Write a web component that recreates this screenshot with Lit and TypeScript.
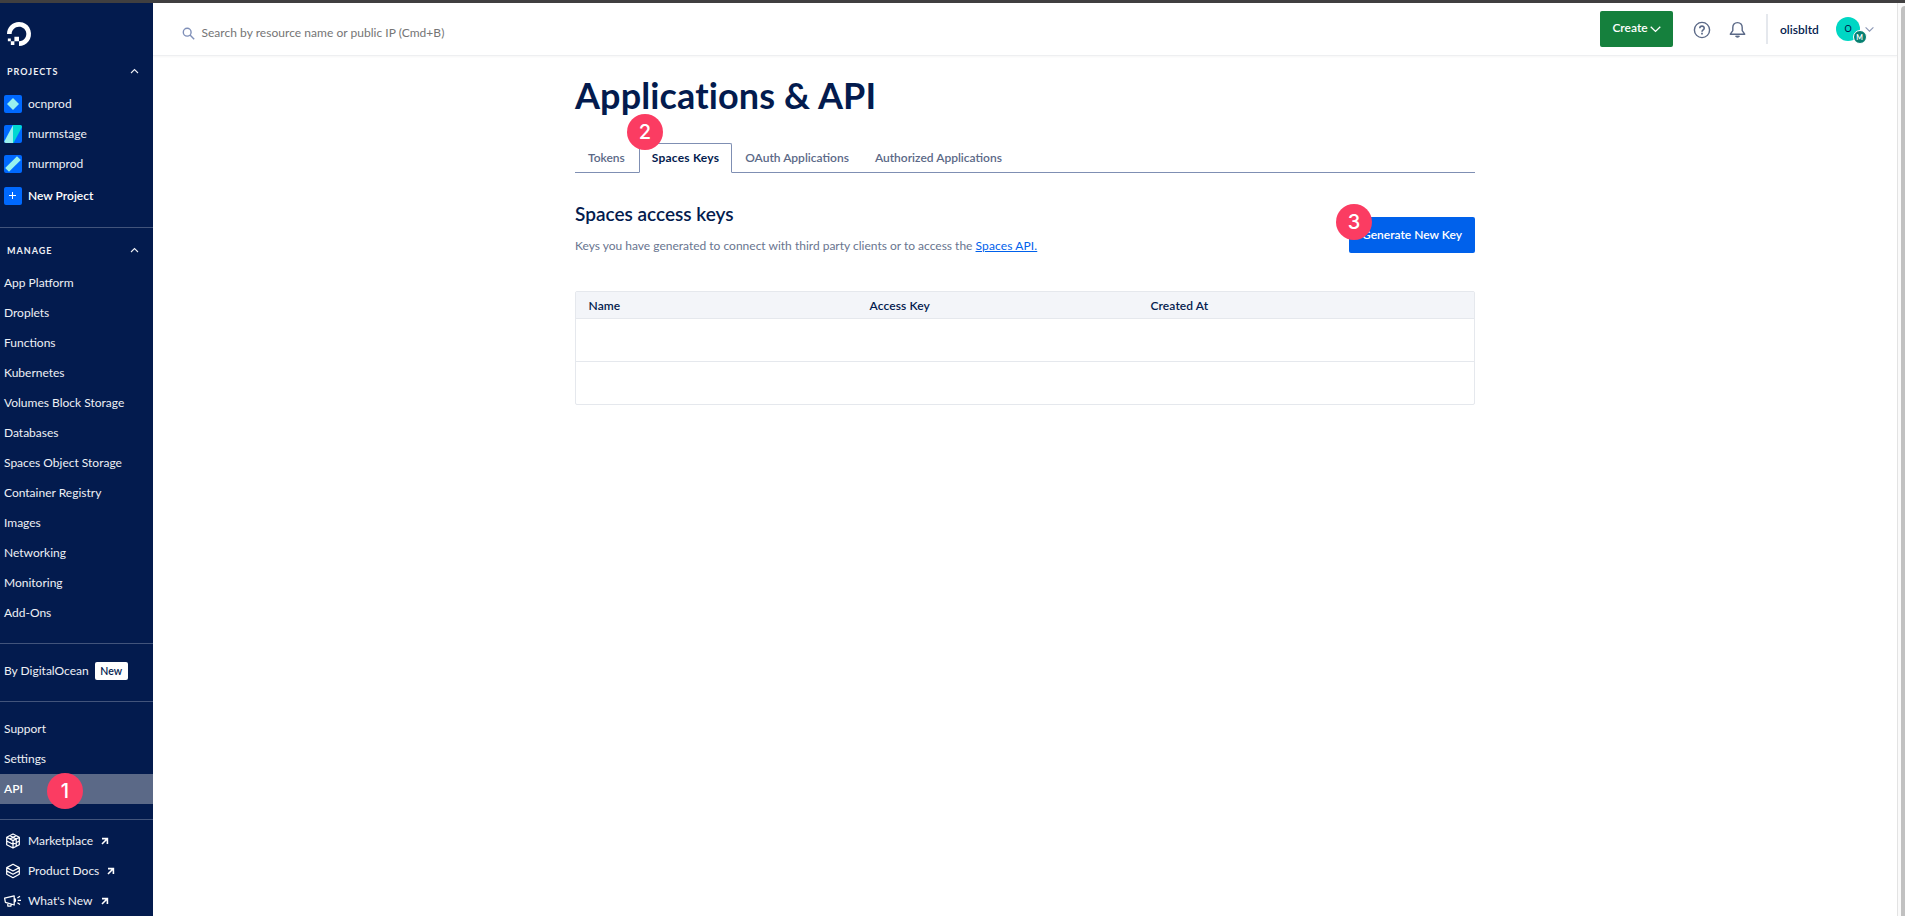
import { LitElement, html, svg, css, nothing } from "lit";
import { customElement, property } from "lit/decorators.js";
import { classMap } from "lit/directives/class-map.js";

const chevron = (dir: "up" | "down") => svg`
  <path d=${dir === "up" ? "M1 5 4.5 1.5 8 5" : "M.6 1.4 4.5 5.2 8.4 1.4"} fill="none" stroke="currentColor" stroke-width="1.1" />`;

const projects = [
  {
    name: "ocnprod",
    art: svg`<path d="M9 3 15 9 9 15 3 9Z" fill="#99f1ee" />`,
  },
  {
    name: "murmstage",
    art: svg`<path d="M9 0H18V2L9.5 18H9Z" fill="#00d7d2" /><path d="M9 0V18H0V17Z" fill="#99f1ee" />`,
  },
  {
    name: "murmprod",
    art: svg`<path d="M13 1.2 16.8 5 5 16.8 1.2 13Z" fill="#99f1ee" />`,
  },
];

const manage = [
  "App Platform",
  "Droplets",
  "Functions",
  "Kubernetes",
  "Volumes Block Storage",
  "Databases",
  "Spaces Object Storage",
  "Container Registry",
  "Images",
  "Networking",
  "Monitoring",
  "Add-Ons",
];

const resources = [
  {
    name: "Marketplace",
    icon: svg`<path d="M8 1 14.3 4.3V11.7L8 15 1.7 11.7V4.3ZM1.7 4.3 8 7.6 14.3 4.3M8 7.6V15M4.9 2.6 11.2 6V13.3M11.2 2.6 4.9 6M1.7 8 8 11.3 14.3 8" />`,
  },
  {
    name: "Product Docs",
    icon: svg`<path d="M8 1.2 14.3 4.6 8 8 1.7 4.6ZM1.7 4.6V7.9L8 11.3 14.3 7.9V4.6M1.7 8V11.3L8 14.7 14.3 11.3V8" />`,
  },
  {
    name: "What's New",
    icon: svg`<path d="M-.4 5.2 9.2 2.8V12L5.5 10.9.4 9.4ZM2.8 10.2V13H6V11.2M9.2 5.4C11 5.6 11 9 9.2 9.2M12.4 5 15 3.2M12.8 7.4H16M12.4 9.8 15 11.6" />`,
  },
];

@customElement("step-badge")
class StepBadge extends LitElement {
  @property() label = "";
  static styles = css`
    :host {
      display: grid;
      place-items: center;
      width: 36px;
      height: 36px;
      border-radius: 50%;
      background: #fb3c62;
      color: #fff;
      font: 500 20px/36px Inter, "Liberation Sans", sans-serif;
      letter-spacing: 0;
    }
  `;
  render() {
    return html`${this.label}`;
  }
}

@customElement("side-nav")
class SideNav extends LitElement {
  static styles = css`
    :host {
      display: block;
      box-sizing: border-box;
      width: 153px;
      padding-top: 19px;
      overflow: hidden;
      background: #031b4e;
      color: #eef0f5;
      font-weight: 400;
    }
    svg {
      display: block;
      flex: none;
      overflow: visible;
    }
    .logo {
      margin: 0 0 9px 7px;
      color: #fff;
    }
    .head {
      display: flex;
      align-items: center;
      justify-content: space-between;
      height: 34px;
      padding: 0 14px 0 7px;
      font-size: 9px;
      font-weight: 700;
      letter-spacing: 1px;
    }
    .item {
      position: relative;
      display: flex;
      align-items: center;
      height: 30px;
      padding-left: 4px;
      white-space: nowrap;
    }
    .active {
      background: #5b6987;
      color: #fff;
      font-weight: 600;
    }
    .active step-badge {
      position: absolute;
      left: 47px;
      top: -1px;
    }
    .tile {
      overflow: hidden;
      margin-right: 6px;
      border-radius: 2px;
      background: #0069ff;
    }
    .create {
      margin-top: 2px;
      color: #fff;
      font-weight: 600;
    }
    .group {
      padding: 12px 0 15px;
      border-bottom: 1px solid #42547b;
    }
    .first {
      padding: 0 0 16px;
    }
    .second {
      padding-top: 6px;
    }
    .last {
      padding-top: 6px;
      border: 0;
    }
    .pill {
      box-sizing: border-box;
      width: 33px;
      margin-left: 6px;
      border-radius: 2px;
      background: #fff;
      color: #031b4e;
      font-size: 10.5px;
      font-weight: 600;
      line-height: 18px;
      text-align: center;
    }
    .glyph {
      margin: 0 7px 0 1px;
      color: #fff;
    }
    .out {
      margin-left: 8px;
      color: #fff;
    }
  `;

  private head(title: string) {
    return html`<div class="head">
      ${title}<svg width="9" height="8" viewBox="0 0 9 8">${chevron("up")}</svg>
    </div>`;
  }

  private link(name: string, active = false) {
    return html`<div class=${classMap({ item: true, active })}>
      ${name}${active ? html`<step-badge label="1"></step-badge>` : nothing}
    </div>`;
  }

  render() {
    return html`
      <svg class="logo" width="24" height="24" viewBox="0 0 24 24" fill="currentColor">
        <path d="M12.04 0C5.408-.02.005 5.37.005 11.992h4.638c0-4.923 4.882-8.731 10.064-6.855a6.95 6.95 0 014.147 4.148c1.889 5.177-1.924 10.055-6.84 10.064v-4.61H7.391v4.623h4.61V24c7.86 0 13.967-7.588 11.397-15.83-1.115-3.59-3.985-6.446-7.575-7.575A12.8 12.8 0 0012.039 0zM7.39 19.362H3.828v3.564H7.39zm-3.563 0v-2.978H.85v2.978z" />
      </svg>
      <div class="group first">
        ${this.head("PROJECTS")}
        ${projects.map(
          (p) => html`<div class="item">
            <svg class="tile" width="18" height="18" viewBox="0 0 18 18">${p.art}</svg>${p.name}
          </div>`
        )}
        <div class="item create">
          <svg class="tile" width="18" height="18" viewBox="0 0 18 18">
            <path d="M8.5 5v7M5 8.5h7" stroke="#fff" stroke-width="1" /></svg
          >New Project
        </div>
      </div>
      <div class="group second">
        ${this.head("MANAGE")} ${manage.map((m) => this.link(m))}
      </div>
      <div class="group">
        <div class="item">By DigitalOcean<span class="pill">New</span></div>
      </div>
      <div class="group">
        ${this.link("Support")} ${this.link("Settings")} ${this.link("API", true)}
      </div>
      <div class="group last">
        ${resources.map(
          (r) => html`<div class="item">
            <svg class="glyph" width="16" height="16" viewBox="0 0 16 16" fill="none" stroke="currentColor" stroke-width="1.25" stroke-linejoin="round">
              ${r.icon}</svg
            >${r.name}
            <svg class="out" width="8" height="8" viewBox="0 0 8 8" fill="none" stroke="currentColor" stroke-width="1.6">
              <path d="M1 1.6H6.4V7M6.2 1.8 1 7" />
            </svg>
          </div>`
        )}
      </div>
    `;
  }
}

@customElement("top-bar")
class TopBar extends LitElement {
  static styles = css`
    :host {
      display: flex;
      align-items: flex-start;
      box-sizing: border-box;
      height: 53px;
      border-bottom: 1px solid #eeeff1;
      box-shadow: 0 1px 2px #0000000a;
      color: #031b4e;
    }
    svg {
      display: block;
      flex: none;
    }
    .search {
      display: flex;
      flex: 1;
      align-items: center;
      gap: 7px;
      height: 60px;
      padding-left: 28.5px;
      color: #757575;
      letter-spacing: 0.03px;
    }
    .create {
      display: flex;
      align-items: center;
      justify-content: center;
      gap: 2px;
      width: 73px;
      height: 36px;
      margin-top: 8px;
      border-radius: 2px;
      background: #15803d;
      color: #fff;
      font-weight: 600;
    }
    .create span {
      padding-bottom: 2px;
    }
    .help {
      margin: 18px 0 0 20px;
    }
    .bell {
      margin: 18px 0 0 18px;
    }
    .rule {
      width: 2px;
      height: 30px;
      margin: 11px 12px 0 20px;
      background: #e5e8ed;
    }
    .user {
      width: 56px;
      font-weight: 600;
      line-height: 54px;
    }
    .avatar {
      position: relative;
      width: 24px;
      height: 24px;
      margin-top: 14px;
      border-radius: 50%;
      background: #00d7c4;
      font-size: 9px;
      font-weight: 500;
      line-height: 24px;
      text-align: center;
    }
    .team {
      position: absolute;
      left: 16.5px;
      top: 13px;
      width: 12px;
      height: 12px;
      border: 1px solid #fff;
      border-radius: 50%;
      background: #078071;
      color: #fff;
      font-size: 7px;
      font-weight: 700;
      line-height: 12px;
    }
    .more {
      margin: 23px 23px 0 5px;
      color: #8a96b5;
    }
  `;
  render() {
    return html`
      <div class="search">
        <svg width="13" height="13" viewBox="0 0 13 13" fill="none" stroke="#7f8fb8" stroke-width="1.4">
          <circle cx="5.2" cy="5.2" r="3.9" />
          <path d="M8 8 12.2 12.2" />
        </svg>
        <span>Search by resource name or public IP (Cmd+B)</span>
      </div>
      <div class="create">
        <span>Create</span><svg width="11" height="8" viewBox="0 0 9 6.5">${chevron("down")}</svg>
      </div>
      <svg class="help" width="18" height="18" viewBox="0 0 18 18" fill="none" stroke="#5b6987" stroke-width="1.4">
        <circle cx="9" cy="9" r="7.6" />
        <path d="M6.8 7.3C6.8 4.4 11.3 4.5 11.2 7.2 11.1 8.9 9 8.7 9 10.7" stroke-width="1.6" />
        <path d="M9 11.8V13.4" stroke-width="1.7" />
      </svg>
      <svg class="bell" width="17" height="18" viewBox="0 0 17 18" fill="none" stroke="#5b6987" stroke-width="1.4" stroke-linejoin="round">
        <path d="M8.5 1.6C5.4 1.6 3.8 3.9 3.8 6.4V9.6L1.3 13.2H15.7L13.2 9.6V6.4C13.2 3.9 11.6 1.6 8.5 1.6Z" />
        <path d="M6.5 15C7 16.8 10 16.8 10.5 15Z" fill="#5b6987" stroke-width=".8" />
      </svg>
      <div class="rule"></div>
      <div class="user">olisbltd</div>
      <div class="avatar">O<span class="team">M</span></div>
      <svg class="more" width="9" height="7" viewBox="0 0 9 7">${chevron("down")}</svg>
    `;
  }
}

@customElement("keys-page")
class KeysPage extends LitElement {
  static styles = css`
    :host {
      display: block;
      width: 900px;
      margin: 0 auto;
      color: #031b4e;
    }
    h1,
    h2,
    p {
      margin: 0;
    }
    h1 {
      padding-top: 17px;
      font-size: 36px;
      font-weight: 700;
      line-height: 44px;
      letter-spacing: 0.13px;
    }
    .tabs {
      display: flex;
      height: 29px;
      margin-top: 26px;
      border-bottom: 1px solid #7f8fb3;
      color: #5b6987;
      font-weight: 600;
    }
    .tab {
      position: relative;
      box-sizing: border-box;
      height: 30px;
      padding: 0 12px;
      border: 1px solid transparent;
      line-height: 27px;
    }
    .tab:first-child {
      padding-right: 13px;
    }
    .current {
      border-color: #7f8fb3;
      border-bottom-color: #fff;
      border-radius: 2px 2px 0 0;
      background: #fff;
      color: #031b4e;
      font-weight: 700;
      letter-spacing: 0.2px;
    }
    .current step-badge {
      position: absolute;
      left: -13px;
      top: -30px;
    }
    .intro {
      display: flex;
      justify-content: space-between;
      margin-top: 30px;
    }
    h2 {
      font-size: 19px;
      font-weight: 600;
      line-height: 22px;
    }
    p {
      margin-top: 12px;
      color: #69758f;
      line-height: 18px;
    }
    a {
      color: #0061eb;
      text-decoration: underline;
      letter-spacing: 0.12px;
    }
    .generate {
      position: relative;
      box-sizing: border-box;
      width: 126px;
      height: 36px;
      margin-top: 14px;
      border-radius: 2px;
      background: #0061eb;
      color: #fff;
      font-weight: 600;
      line-height: 36px;
      text-align: center;
    }
    .generate step-badge {
      position: absolute;
      left: -13px;
      top: -13px;
    }
    .table {
      margin-top: 36px;
      border: 1px solid #e5e8ed;
      border-radius: 2px;
    }
    .row {
      display: grid;
      grid-template-columns: 281px 281px 1fr;
      box-sizing: border-box;
      height: 43px;
      border-top: 1px solid #e5e8ed;
      line-height: 27px;
      font-weight: 600;
    }
    .header {
      height: 26px;
      padding-left: 12.5px;
      border: 0;
      background: #f3f5f9;
      letter-spacing: 0.1px;
    }
  `;
  render() {
    return html`
      <h1>Applications &amp; API</h1>
      <div class="tabs">
        <div class="tab">Tokens</div>
        <div class="tab current">Spaces Keys<step-badge label="2"></step-badge></div>
        <div class="tab">OAuth Applications</div>
        <div class="tab">Authorized Applications</div>
      </div>
      <div class="intro">
        <div>
          <h2>Spaces access keys</h2>
          <p>
            Keys you have generated to connect with third party clients or to access the
            <a>Spaces API.</a>
          </p>
        </div>
        <div class="generate">Generate New Key<step-badge label="3"></step-badge></div>
      </div>
      <div class="table">
        <div class="row header">
          <span>Name</span><span>Access Key</span><span>Created At</span>
        </div>
        <div class="row"></div>
        <div class="row"></div>
      </div>
    `;
  }
}

@customElement("app-root")
class AppRoot extends LitElement {
  static styles = css`
    :host {
      display: grid;
      grid-template-columns: 153px 1fr 8px;
      box-sizing: border-box;
      height: 100vh;
      overflow: hidden;
      border-top: 3px solid #403f40;
      background: #fff;
      font: 400 12px/18px Lato, "Liberation Sans", sans-serif;
    }
    .scroll {
      box-sizing: border-box;
      padding: 3px 0 0 3px;
      border-left: 1px solid #e3e3e3;
      background: #fafafa;
    }
    .thumb {
      height: 100%;
      border-radius: 4px 0 0 0;
      background: #c1c1c1;
    }
  `;
  render() {
    return html`
      <side-nav></side-nav>
      <main>
        <top-bar></top-bar>
        <keys-page></keys-page>
      </main>
      <div class="scroll"><div class="thumb"></div></div>
    `;
  }
}
